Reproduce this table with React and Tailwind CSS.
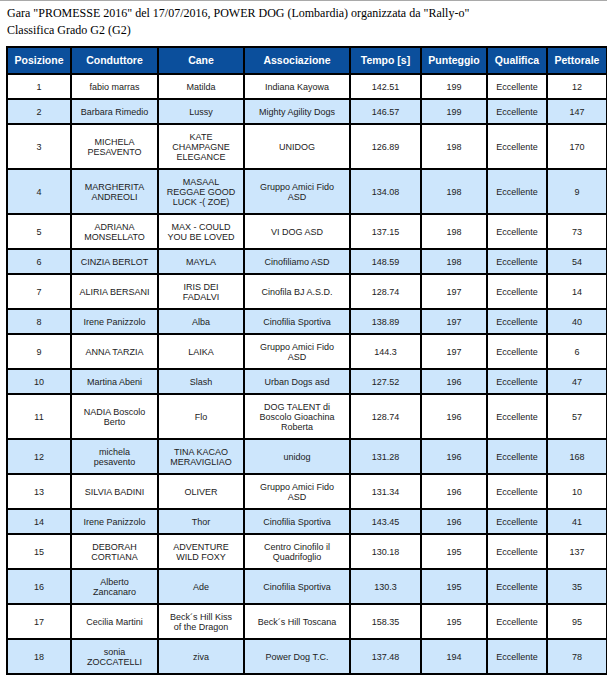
const rows = [
    ["1", ["fabio marras"], ["Matilda"], ["Indiana Kayowa"], "142.51", "199", "12"],
    ["2", ["Barbara Rimedio"], ["Lussy"], ["Mighty Agility Dogs"], "146.57", "199", "147"],
    ["3", ["MICHELA", "PESAVENTO"], ["KATE", "CHAMPAGNE", "ELEGANCE"], ["UNIDOG"], "126.89", "198", "170"],
    ["4", ["MARGHERITA", "ANDREOLI"], ["MASAAL", "REGGAE GOOD", "LUCK -( ZOE)"], ["Gruppo Amici Fido", "ASD"], "134.08", "198", "9"],
    ["5", ["ADRIANA", "MONSELLATO"], ["MAX - COULD", "YOU BE LOVED"], ["VI DOG ASD"], "137.15", "198", "73"],
    ["6", ["CINZIA BERLOT"], ["MAYLA"], ["Cinofiliamo ASD"], "148.59", "198", "54"],
    ["7", ["ALIRIA BERSANI"], ["IRIS DEI", "FADALVI"], ["Cinofila BJ A.S.D."], "128.74", "197", "14"],
    ["8", ["Irene Panizzolo"], ["Alba"], ["Cinofilia Sportiva"], "138.89", "197", "40"],
    ["9", ["ANNA TARZIA"], ["LAIKA"], ["Gruppo Amici Fido", "ASD"], "144.3", "197", "6"],
    ["10", ["Martina Abeni"], ["Slash"], ["Urban Dogs asd"], "127.52", "196", "47"],
    ["11", ["NADIA Boscolo", "Berto"], ["Flo"], ["DOG TALENT di", "Boscolo Gioachina", "Roberta"], "128.74", "196", "57"],
    ["12", ["michela", "pesavento"], ["TINA KACAO", "MERAVIGLIAO"], ["unidog"], "131.28", "196", "168"],
    ["13", ["SILVIA BADINI"], ["OLIVER"], ["Gruppo Amici Fido", "ASD"], "131.34", "196", "10"],
    ["14", ["Irene Panizzolo"], ["Thor"], ["Cinofilia Sportiva"], "143.45", "196", "41"],
    ["15", ["DEBORAH", "CORTIANA"], ["ADVENTURE", "WILD FOXY"], ["Centro Cinofilo il", "Quadrifoglio"], "130.18", "195", "137"],
    ["16", ["Alberto", "Zancanaro"], ["Ade"], ["Cinofilia Sportiva"], "130.3", "195", "35"],
    ["17", ["Cecilia Martini"], ["Beck´s Hill Kiss", "of the Dragon"], ["Beck´s Hill Toscana"], "158.35", "195", "95"],
    ["18", ["sonia", "ZOCCATELLI"], ["ziva"], ["Power Dog T.C."], "137.48", "194", "78"],
];

const headers = [
    ["Posizione", "w-[64px]"],
    ["Conduttore", "w-[87px]"],
    ["Cane", "w-[86px]"],
    ["Associazione", "w-[106px]"],
    ["Tempo [s]", "w-[71px]"],
    ["Punteggio", "w-[66px]"],
    ["Qualifica", "w-[60px]"],
    ["Pettorale", "w-[60px]"],
];

function Lines({ lines }) {
    return lines.map((l, i) => (
        <span key={i}>
            {i > 0 && <br />}
            {l}
        </span>
    ));
}

export default function App() {
    const td = "border-2 border-black pt-[7px] pb-[6px] px-1 leading-[10px]";

    return (
        <div className="bg-white min-h-screen border-t border-[#a9a9a9]">
            <div className="pl-[7px] pt-[4px] text-[12px] leading-[17px] text-black font-['Liberation_Serif',serif]">
                <div>Gara "PROMESSE 2016" del 17/07/2016, POWER DOG (Lombardia) organizzata da "Rally-o"</div>
                <div>Classifica Grado G2 (G2)</div>
            </div>

            <table className="ml-[6px] mt-[7px] w-[600px] table-fixed border-collapse text-center font-['Liberation_Sans',Arial,sans-serif]">
                <colgroup>
                    {headers.map(([h, w]) => (
                        <col key={h} className={w} />
                    ))}
                </colgroup>
                <thead>
                    <tr className="bg-[#0b4f9c]">
                        {headers.map(([h, w]) => (
                            <th
                                key={h}
                                className={`${w} border-2 border-black py-[6px] px-0 text-[10.5px] leading-[13px] font-bold text-white`}
                            >
                                {h}
                            </th>
                        ))}
                    </tr>
                </thead>
                <tbody className="text-[9px] text-[#222]">
                    {rows.map((r, i) => (
                        <tr key={r[0]} className={i % 2 === 1 ? "bg-[#cde6fc]" : "bg-white"}>
                            <td className={td}>{r[0]}</td>
                            <td className={td}><Lines lines={r[1]} /></td>
                            <td className={td}><Lines lines={r[2]} /></td>
                            <td className={td}><Lines lines={r[3]} /></td>
                            <td className={td}>{r[4]}</td>
                            <td className={td}>{r[5]}</td>
                            <td className={td}>Eccellente</td>
                            <td className={td}>{r[6]}</td>
                        </tr>
                    ))}
                </tbody>
            </table>
        </div>
    );
}
